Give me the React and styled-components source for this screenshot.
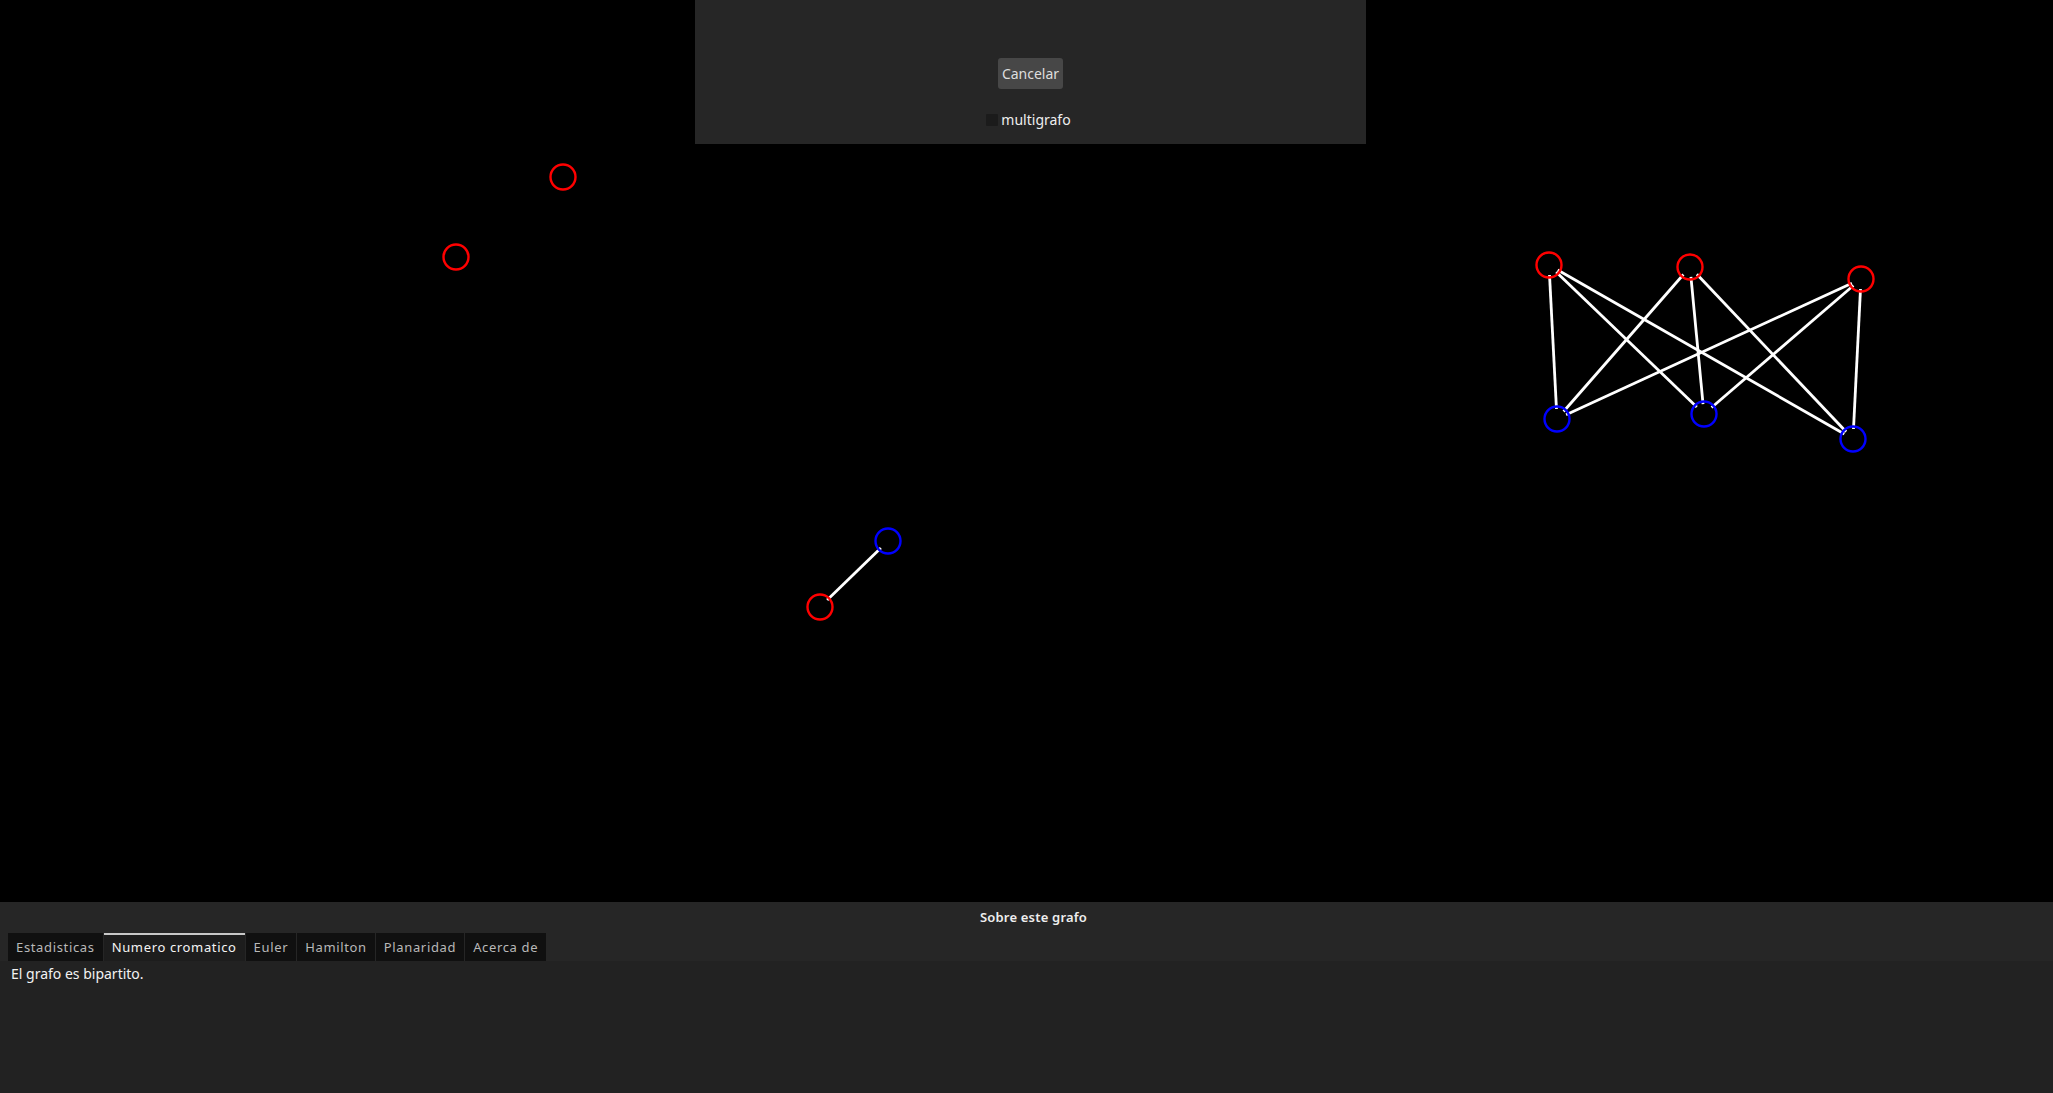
import React from "react";
import styled, { createGlobalStyle } from "styled-components";

const GlobalStyle = createGlobalStyle`
  html, body {
    margin: 0;
    padding: 0;
    background: #000;
    overflow: hidden;
  }
  body {
    font-family: "Noto Sans", "Open Sans", sans-serif;
  }
`;

const Screen = styled.div`
  width: 100vw;
  height: 100vh;
  display: flex;
  flex-direction: column;
`;

const Canvas = styled.div`
  position: relative;
  flex: 1;
  background: #000;
`;

const GraphSvg = styled.svg`
  display: block;
  width: 100%;
  height: 100%;
`;

const Dialog = styled.div`
  position: absolute;
  top: 0;
  left: 695px;
  width: 671px;
  height: 144px;
  background: #262626;
  display: flex;
  flex-direction: column;
  align-items: center;
  padding-top: 58px;
  box-sizing: border-box;
`;

const Button = styled.button`
  height: 31px;
  padding: 0 4px;
  border: none;
  border-radius: 3px;
  background: #474747;
  color: #dedede;
  font-family: "Noto Sans", sans-serif;
  font-size: 14px;
  line-height: 31px;
  cursor: pointer;
`;

const CheckRow = styled.label`
  margin-top: 21px;
  display: flex;
  align-items: center;
  gap: 3px;
  color: #eee;
  font-size: 14px;
  padding-right: 4px;
`;

const CheckBox = styled.span`
  width: 12px;
  height: 12px;
  background: #1b1b1b;
  border-radius: 1px;
`;

const Bottom = styled.div`
  height: 191px;
  display: flex;
  flex-direction: column;
  background: #222;
`;

const Header = styled.div`
  height: 31px;
  background: #262626;
  color: #eee;
  font-size: 13px;
  font-weight: 600;
  display: flex;
  align-items: center;
  justify-content: center;
  padding-left: 14px;
  padding-bottom: 2px;
  box-sizing: border-box;
  letter-spacing: 0.2px;
`;

const TabRow = styled.div`
  display: flex;
  gap: 1px;
  padding-left: 8px;
  background: #262626;
`;

const Tab = styled.div`
  height: 28px;
  box-sizing: border-box;
  padding: 0 8px 2px;
  display: flex;
  align-items: center;
  font-size: 13px;
  letter-spacing: 0.65px;
  color: ${(p) => (p.$active ? "#f4f4f4" : "#b8b8b8")};
  background: ${(p) => (p.$active ? "#1d1d1d" : "#101010")};
  border-top: 2px solid ${(p) => (p.$active ? "#c8c8c8" : "#101010")};
`;

const Content = styled.div`
  flex: 1;
  padding: 3px 11px;
  color: #f2f2f2;
  font-size: 14px;
`;

const nodes = {
  a: { x: 563, y: 177, c: "#ff0000" },
  b: { x: 456, y: 257, c: "#ff0000" },
  c: { x: 820, y: 607, c: "#ff0000" },
  d: { x: 888, y: 541, c: "#0000ff" },
  r1: { x: 1549, y: 265, c: "#ff0000" },
  r2: { x: 1690, y: 267, c: "#ff0000" },
  r3: { x: 1861, y: 279, c: "#ff0000" },
  b1: { x: 1557, y: 419, c: "#0000ff" },
  b2: { x: 1704, y: 414, c: "#0000ff" },
  b3: { x: 1853, y: 439, c: "#0000ff" },
};

const edges = [
  ["c", "d"],
  ["r1", "b1"], ["r1", "b2"], ["r1", "b3"],
  ["r2", "b1"], ["r2", "b2"], ["r2", "b3"],
  ["r3", "b1"], ["r3", "b2"], ["r3", "b3"],
];

const trim = (p, q, d) => {
  const dx = q.x - p.x;
  const dy = q.y - p.y;
  const len = Math.hypot(dx, dy);
  return { x: p.x + (dx / len) * d, y: p.y + (dy / len) * d };
};

const tabs = ["Estadisticas", "Numero cromatico", "Euler", "Hamilton", "Planaridad", "Acerca de"];

export default function App() {
  return (
    <Screen>
      <GlobalStyle />
      <Canvas>
        <GraphSvg>
          {edges.map(([u, v]) => {
            const p = trim(nodes[u], nodes[v], 10);
            const q = trim(nodes[v], nodes[u], 10);
            return (
              <line
                key={u + v}
                x1={p.x}
                y1={p.y}
                x2={q.x}
                y2={q.y}
                stroke="#fff"
                strokeWidth="2.8"
              />
            );
          })}
          {Object.entries(nodes).map(([k, n]) => (
            <circle key={k} cx={n.x} cy={n.y} r="12.5" fill="none" stroke={n.c} strokeWidth="2.4" />
          ))}
        </GraphSvg>
        <Dialog>
          <Button>Cancelar</Button>
          <CheckRow>
            <CheckBox />
            multigrafo
          </CheckRow>
        </Dialog>
      </Canvas>
      <Bottom>
        <Header>Sobre este grafo</Header>
        <TabRow>
          {tabs.map((t, i) => (
            <Tab key={t} $active={i === 1}>{t}</Tab>
          ))}
        </TabRow>
        <Content>El grafo es bipartito.</Content>
      </Bottom>
    </Screen>
  );
}
